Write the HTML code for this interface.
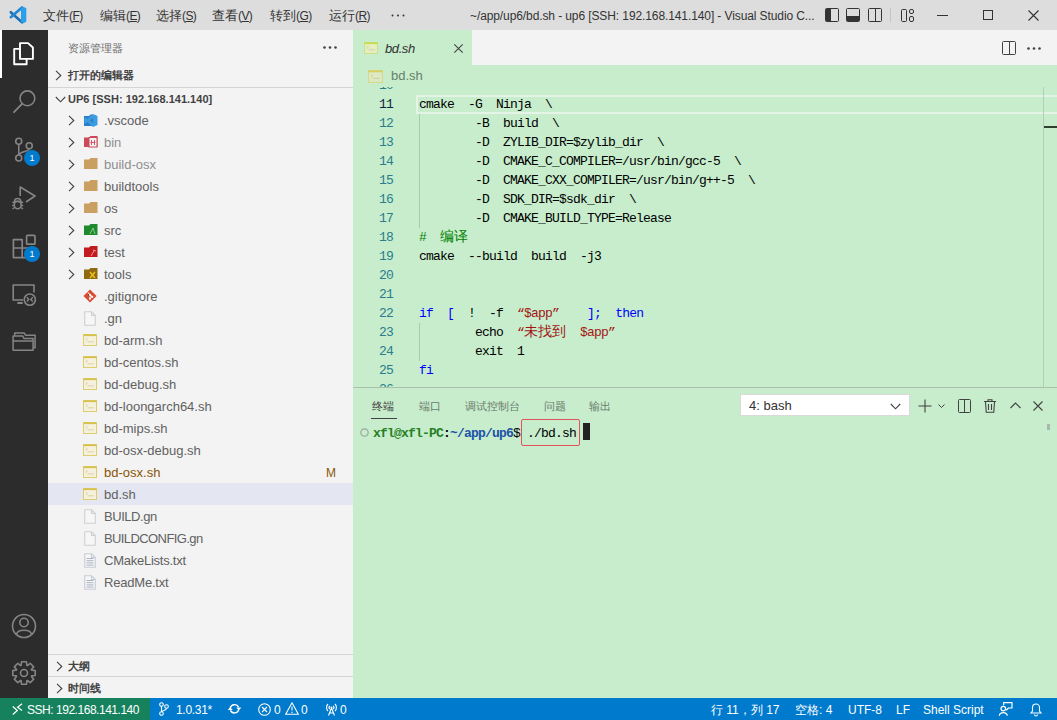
<!DOCTYPE html><html><head><meta charset="utf-8"><style>
*{margin:0;padding:0;box-sizing:border-box}
html,body{width:1057px;height:720px;overflow:hidden;font-family:"Liberation Sans",sans-serif;font-size:13px;color:#333;background:#C7EDCC;position:relative}
div,span,svg{position:absolute}
.t{white-space:pre}
svg{overflow:visible}
</style></head><body>
<div style="left:0;top:0;width:1057px;height:30px;background:#dddddd"></div>
<svg style="left:0;top:0" width="36" height="30"><path d="M10.8 12.2 L22 22.3" stroke="#1c6fb3" stroke-width="2.6" stroke-linecap="round"/><path d="M10.8 17.2 L22 7.5" stroke="#2385cf" stroke-width="2.6" stroke-linecap="round"/><path d="M21 8 L23.5 6.8 L26.3 8.2 V21.8 L23.5 23.2 L21 22 Z" fill="#2aa0ea"/></svg>
<div class="t" style="left:43px;top:1px;height:30px;line-height:30px;font-size:13px;color:#333">文件<span style="position:static;font-size:12px;letter-spacing:-0.6px">(<u>F</u>)</span></div>
<div class="t" style="left:100px;top:1px;height:30px;line-height:30px;font-size:13px;color:#333">编辑<span style="position:static;font-size:12px;letter-spacing:-0.6px">(<u>E</u>)</span></div>
<div class="t" style="left:156px;top:1px;height:30px;line-height:30px;font-size:13px;color:#333">选择<span style="position:static;font-size:12px;letter-spacing:-0.6px">(<u>S</u>)</span></div>
<div class="t" style="left:212px;top:1px;height:30px;line-height:30px;font-size:13px;color:#333">查看<span style="position:static;font-size:12px;letter-spacing:-0.6px">(<u>V</u>)</span></div>
<div class="t" style="left:270px;top:1px;height:30px;line-height:30px;font-size:13px;color:#333">转到<span style="position:static;font-size:12px;letter-spacing:-0.6px">(<u>G</u>)</span></div>
<div class="t" style="left:329px;top:1px;height:30px;line-height:30px;font-size:13px;color:#333">运行<span style="position:static;font-size:12px;letter-spacing:-0.6px">(<u>R</u>)</span></div>
<svg style="left:391px;top:14px" width="14" height="3"><circle cx="1.5" cy="1.5" r="1" fill="#333"/><circle cx="7" cy="1.5" r="1" fill="#333"/><circle cx="12.5" cy="1.5" r="1" fill="#333"/></svg>
<div class="t" style="left:470px;top:1px;height:30px;line-height:30px;font-size:12px;color:#333;letter-spacing:-0.1px">~/app/up6/bd.sh - up6 [SSH: 192.168.141.140] - Visual Studio C...</div>
<svg style="left:825px;top:8px" width="14" height="14"><rect x="0.5" y="0.5" width="13" height="13" rx="1" fill="none" stroke="#333"/><rect x="1" y="1" width="5" height="12" fill="#333"/></svg>
<svg style="left:846px;top:8px" width="14" height="14"><rect x="0.5" y="0.5" width="13" height="13" rx="1" fill="none" stroke="#333"/><rect x="1" y="8" width="12" height="5" fill="#333"/></svg>
<svg style="left:868px;top:8px" width="14" height="14"><rect x="0.5" y="0.5" width="13" height="13" rx="1" fill="none" stroke="#333"/><line x1="7.5" y1="1" x2="7.5" y2="13" stroke="#333"/></svg>
<div style="left:890px;top:8px;width:1px;height:14px;background:#c4c4c4"></div>
<svg style="left:901px;top:9px" width="13" height="13"><rect x="0.5" y="0.5" width="5" height="12" rx="1" fill="none" stroke="#333"/><rect x="8.5" y="0.5" width="4" height="4" rx="1.5" fill="none" stroke="#333"/><rect x="8.5" y="7.5" width="4" height="5" rx="1.5" fill="none" stroke="#333"/></svg>
<div style="left:937px;top:15px;width:11px;height:1px;background:#333"></div>
<div style="left:983px;top:10px;width:10px;height:10px;border:1px solid #333"></div>
<svg style="left:1028px;top:10px" width="11" height="11"><path d="M0.5 0.5 L10.5 10.5 M10.5 0.5 L0.5 10.5" stroke="#333" stroke-width="1.1"/></svg>
<div style="left:0;top:30px;width:48px;height:668px;background:#2c2c2c"></div>
<div style="left:0;top:30px;width:2px;height:48px;background:#fff"></div>
<svg style="left:8px;top:38px" width="32" height="32"><path d="M12 5.1 H20 L24.9 9.5 V20.9 H12 Z" fill="none" stroke="#fff" stroke-width="1.9" stroke-linejoin="round"/><path d="M12 10.9 H6.2 V26.2 H18.6 V20.9" fill="none" stroke="#fff" stroke-width="1.9" stroke-linejoin="round"/></svg>
<svg style="left:0;top:80px" width="48" height="40"><circle cx="27.4" cy="18.3" r="7.4" fill="none" stroke="#858585" stroke-width="1.6"/><path d="M22 23.8 L14 32.2" stroke="#858585" stroke-width="1.8" stroke-linecap="round"/></svg>
<svg style="left:12px;top:137px" width="24" height="24" viewBox="0 0 24 24"><circle cx="6.75" cy="4.25" r="3" fill="none" stroke="#858585" stroke-width="1.6"/><circle cx="6.75" cy="21" r="3" fill="none" stroke="#858585" stroke-width="1.6"/><circle cx="17.25" cy="8.75" r="3" fill="none" stroke="#858585" stroke-width="1.6"/><path d="M6.75 7.25 V18 M17.25 11.75 C17 15 8 14 7 18" fill="none" stroke="#858585" stroke-width="1.5"/></svg>
<div style="left:24px;top:150px;width:16px;height:16px;border-radius:8px;background:#007acc;color:#fff;font-size:9px;line-height:16px;text-align:center">1</div>
<svg style="left:8px;top:180px" width="40" height="35"><path d="M12.2 16 V7 L27 16 L18 22" fill="none" stroke="#858585" stroke-width="1.6" stroke-linejoin="round"/><path d="M6.5 21.5 A3.2 3 0 0 1 12.9 21.5 Z" fill="none" stroke="#858585" stroke-width="1.5"/><ellipse cx="9.7" cy="25" rx="3.4" ry="3.8" fill="none" stroke="#858585" stroke-width="1.5"/><path d="M4.5 22 L6.5 23 M15 22 L13 23 M4.2 25.5 H6.3 M15.2 25.5 H13.1 M4.5 29 L6.5 27.5 M15 29 L13 27.5" stroke="#858585" stroke-width="1.4"/></svg>
<svg style="left:12px;top:233px" width="26" height="26" viewBox="0 0 26 26"><path d="M1.4 6.6 H10.2 V24.6 H1.4 Z M1.4 15 H19.6 V24.6 H10.2" fill="none" stroke="#858585" stroke-width="1.7" stroke-linejoin="round"/><rect x="14.6" y="2.4" width="8.4" height="8.8" rx="0.8" fill="none" stroke="#858585" stroke-width="1.7"/></svg>
<div style="left:24px;top:246px;width:16px;height:16px;border-radius:8px;background:#007acc;color:#fff;font-size:9px;line-height:16px;text-align:center">1</div>
<svg style="left:8px;top:278px" width="32" height="32"><path d="M15 22 H5.2 V7 H26 V14.5" fill="none" stroke="#858585" stroke-width="1.6" stroke-linejoin="round"/><path d="M9.3 25 H14.7" stroke="#858585" stroke-width="2"/><circle cx="21.8" cy="21.6" r="5.6" fill="none" stroke="#858585" stroke-width="1.6"/><path d="M18.8 19.3 L20.8 21.4 L18.8 23.5 M24.8 19.3 L22.8 21.4 L24.8 23.5" fill="none" stroke="#858585" stroke-width="1.4"/></svg>
<svg style="left:8px;top:326px" width="32" height="30"><path d="M6.7 9.5 V6.9 H16.2 L17.6 9.3 H27.1 V21.7 H25.2" fill="none" stroke="#858585" stroke-width="1.5" stroke-linejoin="round"/><path d="M5.1 9.9 H14.6 L15.9 12.4 H25.1 V24.2 H5.1 Z M5.1 14.9 H25.1" fill="none" stroke="#858585" stroke-width="1.5" stroke-linejoin="round"/></svg>
<svg style="left:11px;top:613px" width="26" height="26" viewBox="0 0 26 26"><circle cx="13" cy="13" r="11.5" fill="none" stroke="#858585" stroke-width="1.6"/><circle cx="13" cy="9.5" r="4.2" fill="none" stroke="#858585" stroke-width="1.6"/><path d="M5.5 21 C7 16 19 16 20.5 21" fill="none" stroke="#858585" stroke-width="1.6"/></svg>
<svg style="left:11px;top:660px" width="26" height="26" viewBox="0 0 26 26"><path d="M24.22 10.49 L24.22 15.51 L20.67 15.89 L20.47 16.38 L22.71 19.16 L19.16 22.71 L16.38 20.47 L15.89 20.67 L15.51 24.22 L10.49 24.22 L10.11 20.67 L9.62 20.47 L6.84 22.71 L3.29 19.16 L5.53 16.38 L5.33 15.89 L1.78 15.51 L1.78 10.49 L5.33 10.11 L5.53 9.62 L3.29 6.84 L6.84 3.29 L9.62 5.53 L10.11 5.33 L10.49 1.78 L15.51 1.78 L15.89 5.33 L16.38 5.53 L19.16 3.29 L22.71 6.84 L20.47 9.62 L20.67 10.11 Z" fill="none" stroke="#858585" stroke-width="1.6" stroke-linejoin="round"/><circle cx="13" cy="13" r="3.5" fill="none" stroke="#858585" stroke-width="1.6"/></svg>
<div style="left:48px;top:30px;width:305px;height:668px;background:#f3f3f3"></div>
<div class="t" style="left:68px;top:39px;height:18px;line-height:18px;font-size:11px;color:#6f6f6f">资源管理器</div>
<svg style="left:323px;top:46px" width="14" height="3"><circle cx="1.5" cy="1.5" r="1.3" fill="#424242"/><circle cx="7" cy="1.5" r="1.3" fill="#424242"/><circle cx="12.5" cy="1.5" r="1.3" fill="#424242"/></svg>
<svg style="left:55px;top:70px" width="7" height="11"><path d="M1 0.8 L5.8 5.5 L1 10.2" fill="none" stroke="#424242" stroke-width="1.1"/></svg>
<div class="t" style="left:68px;top:66px;height:18px;line-height:18px;font-size:11px;font-weight:bold;color:#424242">打开的编辑器</div>
<div style="left:48px;top:87px;width:305px;height:1px;background:#d4d4d4"></div>
<svg style="left:55px;top:96px" width="11" height="7"><path d="M0.8 1 L5.5 5.8 L10.2 1" fill="none" stroke="#424242" stroke-width="1.1"/></svg>
<div class="t" style="left:68px;top:90px;height:18px;line-height:18px;font-size:11px;font-weight:bold;color:#424242;letter-spacing:0.02px">UP6 [SSH: 192.168.141.140]</div>
<svg style="left:68px;top:115px" width="7" height="11"><path d="M1 0.8 L5.8 5.5 L1 10.2" fill="none" stroke="#424242" stroke-width="1.1"/></svg>
<svg style="left:84px;top:114px" width="14" height="13" viewBox="0 0 14 13"><path d="M0 2 H5 L6.5 0.5 H9 V12 H0 Z" fill="#2b7fc6"/><path d="M9 0 L13.5 2 V11 L9 13 L3.5 8 L1.5 9.5 L0.5 9 V4 L1.5 3.5 L3.5 5 Z M9 4 L6 6.5 L9 9 Z" fill="#3d9be0" fill-rule="evenodd"/></svg>
<div class="t" style="left:104px;top:110px;height:22px;line-height:22px;font-size:13px;color:#616161;letter-spacing:0px">.vscode</div>
<svg style="left:68px;top:137px" width="7" height="11"><path d="M1 0.8 L5.8 5.5 L1 10.2" fill="none" stroke="#424242" stroke-width="1.1"/></svg>
<svg style="left:84px;top:136px" width="14" height="12" viewBox="0 0 14 12"><path d="M0 1.5 H5 L6.5 0 H13.5 V11 H0 Z" fill="#d0495b"/><rect x="5" y="1.5" width="8" height="9.5" fill="#f3f3f3" stroke="#c8475a" stroke-width="1"/><path d="M7.5 4 V9 M10.5 4 V9 M6.5 6.5 H11.5" stroke="#c8475a" stroke-width="0.9"/></svg>
<div class="t" style="left:104px;top:132px;height:22px;line-height:22px;font-size:13px;color:#8e8e90;letter-spacing:0px">bin</div>
<svg style="left:68px;top:159px" width="7" height="11"><path d="M1 0.8 L5.8 5.5 L1 10.2" fill="none" stroke="#424242" stroke-width="1.1"/></svg>
<svg style="left:84px;top:158px" width="14" height="12" viewBox="0 0 14 12"><path d="M0 1.5 H5 L6.5 0 H13.5 V11 H0 Z" fill="#c9a062"/></svg>
<div class="t" style="left:104px;top:154px;height:22px;line-height:22px;font-size:13px;color:#8e8e90;letter-spacing:0px">build-osx</div>
<svg style="left:68px;top:181px" width="7" height="11"><path d="M1 0.8 L5.8 5.5 L1 10.2" fill="none" stroke="#424242" stroke-width="1.1"/></svg>
<svg style="left:84px;top:180px" width="14" height="12" viewBox="0 0 14 12"><path d="M0 1.5 H5 L6.5 0 H13.5 V11 H0 Z" fill="#c9a062"/></svg>
<div class="t" style="left:104px;top:176px;height:22px;line-height:22px;font-size:13px;color:#616161;letter-spacing:0px">buildtools</div>
<svg style="left:68px;top:203px" width="7" height="11"><path d="M1 0.8 L5.8 5.5 L1 10.2" fill="none" stroke="#424242" stroke-width="1.1"/></svg>
<svg style="left:84px;top:202px" width="14" height="12" viewBox="0 0 14 12"><path d="M0 1.5 H5 L6.5 0 H13.5 V11 H0 Z" fill="#c9a062"/></svg>
<div class="t" style="left:104px;top:198px;height:22px;line-height:22px;font-size:13px;color:#616161;letter-spacing:0px">os</div>
<svg style="left:68px;top:225px" width="7" height="11"><path d="M1 0.8 L5.8 5.5 L1 10.2" fill="none" stroke="#424242" stroke-width="1.1"/></svg>
<svg style="left:84px;top:224px" width="14" height="12" viewBox="0 0 14 12"><path d="M0 1.5 H5 L6.5 0 H13.5 V11 H0 Z" fill="#1e8a2e"/><path d="M6 10 L9 4 L11 10" fill="none" stroke="#8fd18f" stroke-width="0.9"/></svg>
<div class="t" style="left:104px;top:220px;height:22px;line-height:22px;font-size:13px;color:#616161;letter-spacing:0px">src</div>
<svg style="left:68px;top:247px" width="7" height="11"><path d="M1 0.8 L5.8 5.5 L1 10.2" fill="none" stroke="#424242" stroke-width="1.1"/></svg>
<svg style="left:84px;top:246px" width="14" height="12" viewBox="0 0 14 12"><path d="M0 1.5 H5 L6.5 0 H13.5 V11 H0 Z" fill="#c21a1f"/><path d="M7 10 L10.5 4 M9 4 L12 5" fill="none" stroke="#f2a0a0" stroke-width="0.9"/></svg>
<div class="t" style="left:104px;top:242px;height:22px;line-height:22px;font-size:13px;color:#616161;letter-spacing:0px">test</div>
<svg style="left:68px;top:269px" width="7" height="11"><path d="M1 0.8 L5.8 5.5 L1 10.2" fill="none" stroke="#424242" stroke-width="1.1"/></svg>
<svg style="left:84px;top:268px" width="14" height="12" viewBox="0 0 14 12"><path d="M0 1.5 H5 L6.5 0 H13.5 V11 H0 Z" fill="#8f6b10"/><path d="M6 10 L11 4 M6 4 L11 10" fill="none" stroke="#f0c419" stroke-width="1.4"/></svg>
<div class="t" style="left:104px;top:264px;height:22px;line-height:22px;font-size:13px;color:#616161;letter-spacing:0px">tools</div>
<svg style="left:83px;top:289px" width="14" height="14" viewBox="0 0 16 16"><path d="M8 0.5 L15.5 8 L8 15.5 L0.5 8 Z" fill="#dd4b2f"/><path d="M5.5 4 L8 6.5 V11 M8 6.5 L10.5 9" stroke="#fff" stroke-width="1.2"/><circle cx="8" cy="11" r="1.2" fill="#fff"/><circle cx="10.5" cy="9" r="1.2" fill="#fff"/><circle cx="8" cy="6.5" r="1.1" fill="#fff"/></svg>
<div class="t" style="left:104px;top:286px;height:22px;line-height:22px;font-size:13px;color:#616161;letter-spacing:0px">.gitignore</div>
<svg style="left:84px;top:311px" width="12" height="15" viewBox="0 0 12 15"><path d="M0.7 0.7 H7.5 L11.3 4.5 V14.3 H0.7 Z M7.5 0.7 V4.5 H11.3" fill="#f6f6f6" stroke="#cfcfcf" stroke-width="1.1" stroke-linejoin="round"/></svg>
<div class="t" style="left:104px;top:308px;height:22px;line-height:22px;font-size:13px;color:#616161;letter-spacing:0px">.gn</div>
<svg style="left:83px;top:334px" width="14" height="12" viewBox="0 0 14 12"><rect x="0.5" y="0.5" width="13" height="11" fill="#f5f1dc" stroke="#dccd6e" stroke-width="1"/><rect x="0.5" y="0.5" width="13" height="1.6" fill="#d6c24a"/><path d="M2.8 4.2 L4.4 5.4 L2.8 6.6 M4.5 7.8 H11" fill="none" stroke="#d2cc9c" stroke-width="0.8"/></svg>
<div class="t" style="left:104px;top:330px;height:22px;line-height:22px;font-size:13px;color:#616161;letter-spacing:0px">bd-arm.sh</div>
<svg style="left:83px;top:356px" width="14" height="12" viewBox="0 0 14 12"><rect x="0.5" y="0.5" width="13" height="11" fill="#f5f1dc" stroke="#dccd6e" stroke-width="1"/><rect x="0.5" y="0.5" width="13" height="1.6" fill="#d6c24a"/><path d="M2.8 4.2 L4.4 5.4 L2.8 6.6 M4.5 7.8 H11" fill="none" stroke="#d2cc9c" stroke-width="0.8"/></svg>
<div class="t" style="left:104px;top:352px;height:22px;line-height:22px;font-size:13px;color:#616161;letter-spacing:0px">bd-centos.sh</div>
<svg style="left:83px;top:378px" width="14" height="12" viewBox="0 0 14 12"><rect x="0.5" y="0.5" width="13" height="11" fill="#f5f1dc" stroke="#dccd6e" stroke-width="1"/><rect x="0.5" y="0.5" width="13" height="1.6" fill="#d6c24a"/><path d="M2.8 4.2 L4.4 5.4 L2.8 6.6 M4.5 7.8 H11" fill="none" stroke="#d2cc9c" stroke-width="0.8"/></svg>
<div class="t" style="left:104px;top:374px;height:22px;line-height:22px;font-size:13px;color:#616161;letter-spacing:0px">bd-debug.sh</div>
<svg style="left:83px;top:400px" width="14" height="12" viewBox="0 0 14 12"><rect x="0.5" y="0.5" width="13" height="11" fill="#f5f1dc" stroke="#dccd6e" stroke-width="1"/><rect x="0.5" y="0.5" width="13" height="1.6" fill="#d6c24a"/><path d="M2.8 4.2 L4.4 5.4 L2.8 6.6 M4.5 7.8 H11" fill="none" stroke="#d2cc9c" stroke-width="0.8"/></svg>
<div class="t" style="left:104px;top:396px;height:22px;line-height:22px;font-size:13px;color:#616161;letter-spacing:0px">bd-loongarch64.sh</div>
<svg style="left:83px;top:422px" width="14" height="12" viewBox="0 0 14 12"><rect x="0.5" y="0.5" width="13" height="11" fill="#f5f1dc" stroke="#dccd6e" stroke-width="1"/><rect x="0.5" y="0.5" width="13" height="1.6" fill="#d6c24a"/><path d="M2.8 4.2 L4.4 5.4 L2.8 6.6 M4.5 7.8 H11" fill="none" stroke="#d2cc9c" stroke-width="0.8"/></svg>
<div class="t" style="left:104px;top:418px;height:22px;line-height:22px;font-size:13px;color:#616161;letter-spacing:0px">bd-mips.sh</div>
<svg style="left:83px;top:444px" width="14" height="12" viewBox="0 0 14 12"><rect x="0.5" y="0.5" width="13" height="11" fill="#f5f1dc" stroke="#dccd6e" stroke-width="1"/><rect x="0.5" y="0.5" width="13" height="1.6" fill="#d6c24a"/><path d="M2.8 4.2 L4.4 5.4 L2.8 6.6 M4.5 7.8 H11" fill="none" stroke="#d2cc9c" stroke-width="0.8"/></svg>
<div class="t" style="left:104px;top:440px;height:22px;line-height:22px;font-size:13px;color:#616161;letter-spacing:0px">bd-osx-debug.sh</div>
<svg style="left:83px;top:466px" width="14" height="12" viewBox="0 0 14 12"><rect x="0.5" y="0.5" width="13" height="11" fill="#f5f1dc" stroke="#dccd6e" stroke-width="1"/><rect x="0.5" y="0.5" width="13" height="1.6" fill="#d6c24a"/><path d="M2.8 4.2 L4.4 5.4 L2.8 6.6 M4.5 7.8 H11" fill="none" stroke="#d2cc9c" stroke-width="0.8"/></svg>
<div class="t" style="left:104px;top:462px;height:22px;line-height:22px;font-size:13px;color:#895503;letter-spacing:0px">bd-osx.sh</div>
<div class="t" style="left:326px;top:462px;height:22px;line-height:22px;font-size:12px;color:#895503">M</div>
<div style="left:48px;top:483px;width:305px;height:22px;background:#e4e6f1"></div>
<svg style="left:83px;top:488px" width="14" height="12" viewBox="0 0 14 12"><rect x="0.5" y="0.5" width="13" height="11" fill="#f5f1dc" stroke="#dccd6e" stroke-width="1"/><rect x="0.5" y="0.5" width="13" height="1.6" fill="#d6c24a"/><path d="M2.8 4.2 L4.4 5.4 L2.8 6.6 M4.5 7.8 H11" fill="none" stroke="#d2cc9c" stroke-width="0.8"/></svg>
<div class="t" style="left:104px;top:484px;height:22px;line-height:22px;font-size:13px;color:#616161;letter-spacing:0px">bd.sh</div>
<svg style="left:84px;top:509px" width="12" height="15" viewBox="0 0 12 15"><path d="M0.7 0.7 H7.5 L11.3 4.5 V14.3 H0.7 Z M7.5 0.7 V4.5 H11.3" fill="#f6f6f6" stroke="#cfcfcf" stroke-width="1.1" stroke-linejoin="round"/></svg>
<div class="t" style="left:104px;top:506px;height:22px;line-height:22px;font-size:13px;color:#616161;letter-spacing:-0.45px">BUILD.gn</div>
<svg style="left:84px;top:531px" width="12" height="15" viewBox="0 0 12 15"><path d="M0.7 0.7 H7.5 L11.3 4.5 V14.3 H0.7 Z M7.5 0.7 V4.5 H11.3" fill="#f6f6f6" stroke="#cfcfcf" stroke-width="1.1" stroke-linejoin="round"/></svg>
<div class="t" style="left:104px;top:528px;height:22px;line-height:22px;font-size:13px;color:#616161;letter-spacing:-0.6px">BUILDCONFIG.gn</div>
<svg style="left:84px;top:553px" width="12" height="15" viewBox="0 0 12 15"><path d="M0.7 0.7 H7.5 L11.3 4.5 V14.3 H0.7 Z M7.5 0.7 V4.5 H11.3" fill="#f6f6f6" stroke="#c6ccd6" stroke-width="1.1" stroke-linejoin="round"/><path d="M2.5 5.5 H9.5 M2.5 7.7 H9.5 M2.5 9.9 H9.5 M2.5 12.1 H9.5" stroke="#a9b3c2" stroke-width="1"/></svg>
<div class="t" style="left:104px;top:550px;height:22px;line-height:22px;font-size:13px;color:#616161;letter-spacing:-0.25px">CMakeLists.txt</div>
<svg style="left:84px;top:575px" width="12" height="15" viewBox="0 0 12 15"><path d="M0.7 0.7 H7.5 L11.3 4.5 V14.3 H0.7 Z M7.5 0.7 V4.5 H11.3" fill="#f6f6f6" stroke="#c6ccd6" stroke-width="1.1" stroke-linejoin="round"/><path d="M2.5 5.5 H9.5 M2.5 7.7 H9.5 M2.5 9.9 H9.5 M2.5 12.1 H9.5" stroke="#a9b3c2" stroke-width="1"/></svg>
<div class="t" style="left:104px;top:572px;height:22px;line-height:22px;font-size:13px;color:#616161;letter-spacing:-0.2px">ReadMe.txt</div>
<div style="left:48px;top:654px;width:305px;height:1px;background:#d4d4d4"></div>
<svg style="left:56px;top:661px" width="7" height="11"><path d="M1 0.8 L5.8 5.5 L1 10.2" fill="none" stroke="#424242" stroke-width="1.1"/></svg>
<div class="t" style="left:68px;top:657px;height:18px;line-height:18px;font-size:11px;font-weight:bold;color:#424242">大纲</div>
<div style="left:48px;top:676px;width:305px;height:1px;background:#d4d4d4"></div>
<svg style="left:56px;top:683px" width="7" height="11"><path d="M1 0.8 L5.8 5.5 L1 10.2" fill="none" stroke="#424242" stroke-width="1.1"/></svg>
<div class="t" style="left:68px;top:679px;height:18px;line-height:18px;font-size:11px;font-weight:bold;color:#424242">时间线</div>
<div style="left:353px;top:30px;width:704px;height:668px;background:#C7EDCC"></div>
<div style="left:353px;top:30px;width:704px;height:35px;background:#f3f3f3"></div>
<div style="left:353px;top:30px;width:119px;height:35px;background:#C7EDCC"></div>
<svg style="left:364px;top:42px" width="14" height="12" viewBox="0 0 14 12"><rect x="0.5" y="0.5" width="13" height="11" fill="#e4eec3" stroke="#d0df86" stroke-width="1"/><rect x="0.5" y="0.5" width="13" height="1.6" fill="#c5dc48"/><path d="M2.8 4.2 L4.4 5.4 L2.8 6.6 M4.5 7.8 H11" fill="none" stroke="#d2cc9c" stroke-width="0.8"/></svg>
<div class="t" style="left:385px;top:31px;height:35px;line-height:35px;font-size:13px;font-style:italic;color:#333;letter-spacing:-0.4px">bd.sh</div>
<svg style="left:454px;top:44px" width="9" height="9"><path d="M0.3 0.3 L8.7 8.7 M8.7 0.3 L0.3 8.7" stroke="#424242" stroke-width="1.1"/></svg>
<svg style="left:1002px;top:41px" width="14" height="14"><rect x="0.5" y="0.5" width="13" height="13" rx="1" fill="none" stroke="#424242"/><line x1="7.5" y1="1" x2="7.5" y2="13" stroke="#424242"/></svg>
<svg style="left:1027px;top:47px" width="14" height="3"><circle cx="1.5" cy="1.5" r="1.3" fill="#424242"/><circle cx="7" cy="1.5" r="1.3" fill="#424242"/><circle cx="12.5" cy="1.5" r="1.3" fill="#424242"/></svg>
<div style="left:368px;top:70px;width:15px;height:13px;transform-origin:0 0"><svg style="left:0px;top:0px" width="15" height="13" preserveAspectRatio="none" viewBox="0 0 14 12"><rect x="0.5" y="0.5" width="13" height="11" fill="#dce9c2" stroke="#d6d98e" stroke-width="1"/><rect x="0.5" y="0.5" width="13" height="1.6" fill="#d8cf5c"/><path d="M2.8 4.2 L4.4 5.4 L2.8 6.6 M4.5 7.8 H11" fill="none" stroke="#d2cc9c" stroke-width="0.8"/></svg></div>
<div class="t" style="left:391px;top:65px;height:22px;line-height:22px;font-size:13px;color:#687f6b">bd.sh</div>
<div style="left:353px;top:87px;width:704px;height:300px;overflow:hidden">
<div class="t" style="left:0;top:-11px;width:40px;height:19px;line-height:19px;text-align:right;font-family:'Liberation Mono',monospace;font-size:13px;letter-spacing:-0.8px;color:#2a7d8c">10</div>
<div style="left:63px;top:8px;width:645px;height:19px;border:2px solid #e4f4e7"></div>
<div class="t" style="left:0;top:8px;width:40px;height:19px;line-height:19px;text-align:right;font-family:'Liberation Mono',monospace;font-size:13px;letter-spacing:-0.8px;color:#0f2540">11</div>
<div class="t" style="left:66px;top:8px;height:19px;line-height:19px;font-family:'Liberation Mono',monospace;font-size:13px;letter-spacing:-0.8px"><span style="position:static;color:#000">cmake  -G  Ninja  \</span></div>
<div class="t" style="left:0;top:27px;width:40px;height:19px;line-height:19px;text-align:right;font-family:'Liberation Mono',monospace;font-size:13px;letter-spacing:-0.8px;color:#2a7d8c">12</div>
<div class="t" style="left:66px;top:27px;height:19px;line-height:19px;font-family:'Liberation Mono',monospace;font-size:13px;letter-spacing:-0.8px"><span style="position:static;color:#000">        -B  build  \</span></div>
<div class="t" style="left:0;top:46px;width:40px;height:19px;line-height:19px;text-align:right;font-family:'Liberation Mono',monospace;font-size:13px;letter-spacing:-0.8px;color:#2a7d8c">13</div>
<div class="t" style="left:66px;top:46px;height:19px;line-height:19px;font-family:'Liberation Mono',monospace;font-size:13px;letter-spacing:-0.8px"><span style="position:static;color:#000">        -D  ZYLIB_DIR=$zylib_dir  \</span></div>
<div class="t" style="left:0;top:65px;width:40px;height:19px;line-height:19px;text-align:right;font-family:'Liberation Mono',monospace;font-size:13px;letter-spacing:-0.8px;color:#2a7d8c">14</div>
<div class="t" style="left:66px;top:65px;height:19px;line-height:19px;font-family:'Liberation Mono',monospace;font-size:13px;letter-spacing:-0.8px"><span style="position:static;color:#000">        -D  CMAKE_C_COMPILER=/usr/bin/gcc-5  \</span></div>
<div class="t" style="left:0;top:84px;width:40px;height:19px;line-height:19px;text-align:right;font-family:'Liberation Mono',monospace;font-size:13px;letter-spacing:-0.8px;color:#2a7d8c">15</div>
<div class="t" style="left:66px;top:84px;height:19px;line-height:19px;font-family:'Liberation Mono',monospace;font-size:13px;letter-spacing:-0.8px"><span style="position:static;color:#000">        -D  CMAKE_CXX_COMPILER=/usr/bin/g++-5  \</span></div>
<div class="t" style="left:0;top:103px;width:40px;height:19px;line-height:19px;text-align:right;font-family:'Liberation Mono',monospace;font-size:13px;letter-spacing:-0.8px;color:#2a7d8c">16</div>
<div class="t" style="left:66px;top:103px;height:19px;line-height:19px;font-family:'Liberation Mono',monospace;font-size:13px;letter-spacing:-0.8px"><span style="position:static;color:#000">        -D  SDK_DIR=$sdk_dir  \</span></div>
<div class="t" style="left:0;top:122px;width:40px;height:19px;line-height:19px;text-align:right;font-family:'Liberation Mono',monospace;font-size:13px;letter-spacing:-0.8px;color:#2a7d8c">17</div>
<div class="t" style="left:66px;top:122px;height:19px;line-height:19px;font-family:'Liberation Mono',monospace;font-size:13px;letter-spacing:-0.8px"><span style="position:static;color:#000">        -D  CMAKE_BUILD_TYPE=Release</span></div>
<div class="t" style="left:0;top:141px;width:40px;height:19px;line-height:19px;text-align:right;font-family:'Liberation Mono',monospace;font-size:13px;letter-spacing:-0.8px;color:#2a7d8c">18</div>
<div class="t" style="left:66px;top:141px;height:19px;line-height:19px;font-family:'Liberation Mono',monospace;font-size:13px;letter-spacing:-0.8px"><span style="position:static;color:#008000">#  <span style="position:static;font-size:14px;letter-spacing:0">编译</span></span></div>
<div class="t" style="left:0;top:160px;width:40px;height:19px;line-height:19px;text-align:right;font-family:'Liberation Mono',monospace;font-size:13px;letter-spacing:-0.8px;color:#2a7d8c">19</div>
<div class="t" style="left:66px;top:160px;height:19px;line-height:19px;font-family:'Liberation Mono',monospace;font-size:13px;letter-spacing:-0.8px"><span style="position:static;color:#000">cmake  --build  build  -j3</span></div>
<div class="t" style="left:0;top:179px;width:40px;height:19px;line-height:19px;text-align:right;font-family:'Liberation Mono',monospace;font-size:13px;letter-spacing:-0.8px;color:#2a7d8c">20</div>
<div class="t" style="left:0;top:198px;width:40px;height:19px;line-height:19px;text-align:right;font-family:'Liberation Mono',monospace;font-size:13px;letter-spacing:-0.8px;color:#2a7d8c">21</div>
<div class="t" style="left:0;top:217px;width:40px;height:19px;line-height:19px;text-align:right;font-family:'Liberation Mono',monospace;font-size:13px;letter-spacing:-0.8px;color:#2a7d8c">22</div>
<div class="t" style="left:66px;top:217px;height:19px;line-height:19px;font-family:'Liberation Mono',monospace;font-size:13px;letter-spacing:-0.8px"><span style="position:static;color:#0000ff">if</span><span style="position:static;color:#000">  </span><span style="position:static;color:#0000ff">[</span><span style="position:static;color:#000">  !  -f  </span><span style="position:static;color:#a31515">“$app”</span><span style="position:static;color:#000">    </span><span style="position:static;color:#0000ff">];</span><span style="position:static;color:#000">  </span><span style="position:static;color:#0000ff">then</span></div>
<div class="t" style="left:0;top:236px;width:40px;height:19px;line-height:19px;text-align:right;font-family:'Liberation Mono',monospace;font-size:13px;letter-spacing:-0.8px;color:#2a7d8c">23</div>
<div class="t" style="left:66px;top:236px;height:19px;line-height:19px;font-family:'Liberation Mono',monospace;font-size:13px;letter-spacing:-0.8px"><span style="position:static;color:#000">        echo  </span><span style="position:static;color:#a31515">“<span style="position:static;font-size:14px;letter-spacing:0">未找到</span>  $app”</span></div>
<div class="t" style="left:0;top:255px;width:40px;height:19px;line-height:19px;text-align:right;font-family:'Liberation Mono',monospace;font-size:13px;letter-spacing:-0.8px;color:#2a7d8c">24</div>
<div class="t" style="left:66px;top:255px;height:19px;line-height:19px;font-family:'Liberation Mono',monospace;font-size:13px;letter-spacing:-0.8px"><span style="position:static;color:#000">        exit  1</span></div>
<div class="t" style="left:0;top:274px;width:40px;height:19px;line-height:19px;text-align:right;font-family:'Liberation Mono',monospace;font-size:13px;letter-spacing:-0.8px;color:#2a7d8c">25</div>
<div class="t" style="left:66px;top:274px;height:19px;line-height:19px;font-family:'Liberation Mono',monospace;font-size:13px;letter-spacing:-0.8px"><span style="position:static;color:#0000ff">fi</span></div>
<div class="t" style="left:0;top:293px;width:40px;height:19px;line-height:19px;text-align:right;font-family:'Liberation Mono',monospace;font-size:13px;letter-spacing:-0.8px;color:#2a7d8c">26</div>
<div style="left:66px;top:27px;width:1px;height:114px;background:#a9c9ae"></div>
<div style="left:66px;top:236px;width:1px;height:38px;background:#a9c9ae"></div>
</div>
<div style="left:1043px;top:87px;width:1px;height:300px;background:#b6cdb9"></div>
<div style="left:1044px;top:126px;width:13px;height:2px;background:#2f3f30"></div>
<div style="left:353px;top:387px;width:704px;height:1px;background:#a9c0ac"></div>
<div class="t" style="left:372px;top:397px;height:18px;line-height:18px;font-size:11px;color:#424242">终端</div>
<div class="t" style="left:419px;top:397px;height:18px;line-height:18px;font-size:11px;color:#6b7a6d">端口</div>
<div class="t" style="left:465px;top:397px;height:18px;line-height:18px;font-size:11px;color:#6b7a6d">调试控制台</div>
<div class="t" style="left:544px;top:397px;height:18px;line-height:18px;font-size:11px;color:#6b7a6d">问题</div>
<div class="t" style="left:589px;top:397px;height:18px;line-height:18px;font-size:11px;color:#6b7a6d">输出</div>
<div style="left:371px;top:418px;width:26px;height:1px;background:#424242"></div>
<div style="left:740px;top:394px;width:170px;height:22px;background:#fff;border:1px solid #dadada"></div>
<div class="t" style="left:749px;top:395px;height:22px;line-height:22px;font-size:13px;color:#333">4: bash</div>
<svg style="left:890px;top:403px" width="11" height="7"><path d="M0.8 1 L5.5 5.8 L10.2 1" fill="none" stroke="#424242" stroke-width="1.1"/></svg>
<svg style="left:918px;top:399px" width="14" height="14"><path d="M7 0.5 V13.5 M0.5 7 H13.5" stroke="#424242" stroke-width="1.1"/></svg>
<svg style="left:938px;top:404px" width="7" height="5"><path d="M0.5 0.5 L3.5 3.5 L6.5 0.5" fill="none" stroke="#424242" stroke-width="1"/></svg>
<svg style="left:958px;top:399px" width="13" height="14"><rect x="0.5" y="0.5" width="12" height="13" rx="1" fill="none" stroke="#424242"/><line x1="6.5" y1="1" x2="6.5" y2="13" stroke="#424242"/></svg>
<svg style="left:984px;top:399px" width="12" height="14"><path d="M0 2.5 H12 M4 2.5 V0.8 H8 V2.5 M1.5 2.5 L2.2 13.3 H9.8 L10.5 2.5 M4.5 5 V11 M7.5 5 V11" fill="none" stroke="#424242" stroke-width="1.1"/></svg>
<svg style="left:1010px;top:402px" width="11" height="7"><path d="M0.5 6 L5.5 1 L10.5 6" fill="none" stroke="#424242" stroke-width="1.1"/></svg>
<svg style="left:1033px;top:401px" width="10" height="10"><path d="M0.5 0.5 L9.5 9.5 M9.5 0.5 L0.5 9.5" stroke="#424242" stroke-width="1.1"/></svg>
<div style="left:1047px;top:424px;width:3px;height:6px;background:#a8b8aa"></div>
<svg style="left:360px;top:428px" width="9" height="9"><circle cx="4.5" cy="4.5" r="3.7" fill="none" stroke="#9aa89c" stroke-width="1.2"/></svg>
<div class="t" style="left:373px;top:424px;height:19px;line-height:19px;font-family:'Liberation Mono',monospace;font-size:13px;letter-spacing:-0.8px"><span style="position:static;color:#267f26;font-weight:bold">xfl@xfl-PC</span><span style="position:static;color:#000;font-weight:bold">:</span><span style="position:static;color:#1d52a8;font-weight:bold">~/app/up6</span><span style="position:static;color:#000">$ ./bd.sh</span></div>
<div style="left:521px;top:419px;width:59px;height:27px;border:1.5px solid #e2525a;border-radius:2px"></div>
<div style="left:583px;top:423px;width:7px;height:17px;background:#222"></div>
<div style="left:0;top:698px;width:1057px;height:22px;background:#007acc"></div>
<div style="left:0;top:698px;width:150px;height:22px;background:#16825d"></div>
<svg style="left:10px;top:700px" width="14" height="18"><path d="M2.8 6.5 L7.3 10.5 L2.8 14.5 M12 3.8 L7.6 7.2 L12 10.5" fill="none" stroke="#fff" stroke-width="1.2"/></svg>
<div class="t" style="left:27px;top:698px;height:22px;line-height:24px;font-size:12px;color:#fff;letter-spacing:-0.47px">SSH: 192.168.141.140</div>
<svg style="left:159px;top:702px" width="10" height="14"><circle cx="2.5" cy="2.5" r="1.8" fill="none" stroke="#fff" stroke-width="1.1"/><circle cx="2.5" cy="11.5" r="1.8" fill="none" stroke="#fff" stroke-width="1.1"/><circle cx="7.5" cy="4.5" r="1.8" fill="none" stroke="#fff" stroke-width="1.1"/><path d="M2.5 4.3 V9.7 M7.5 6.3 C7.5 9 3 8 2.7 9.8" fill="none" stroke="#fff" stroke-width="1.1"/></svg>
<div class="t" style="left:176px;top:698px;height:22px;line-height:24px;font-size:12px;color:#fff;letter-spacing:-0.3px">1.0.31*</div>
<svg style="left:226px;top:702px" width="17" height="14"><path d="M4.2 6 A4.5 4.5 0 0 1 12.6 5.2 M12.8 7.6 A4.5 4.5 0 0 1 4.4 8.4" fill="none" stroke="#fff" stroke-width="1.4"/><path d="M10.3 5.6 L15.3 5.6 L12.8 8.4 Z M1.7 8 L6.7 8 L4.2 5.2 Z" fill="#fff"/></svg>
<svg style="left:258px;top:703px" width="13" height="13"><circle cx="6.5" cy="6.5" r="5.8" fill="none" stroke="#fff" stroke-width="1.1"/><path d="M4 4 L9 9 M9 4 L4 9" stroke="#fff" stroke-width="1.1"/></svg>
<div class="t" style="left:274px;top:698px;height:22px;line-height:24px;font-size:12px;color:#fff">0</div>
<svg style="left:285px;top:702px" width="14" height="13"><path d="M7 0.8 L13.3 12.3 H0.7 Z M7 4.5 V8.5 M7 9.8 V11" fill="none" stroke="#fff" stroke-width="1.1"/></svg>
<div class="t" style="left:301px;top:698px;height:22px;line-height:24px;font-size:12px;color:#fff">0</div>
<svg style="left:325px;top:702px" width="13" height="14"><path d="M6.5 6 L3.5 13.5 M6.5 6 L9.5 13.5 M4.5 11 H8.5 M3 2 A5 5 0 0 0 3 9 M10 2 A5 5 0 0 1 10 9 M4.8 3.8 A2.5 2.5 0 0 0 4.8 7.2 M8.2 3.8 A2.5 2.5 0 0 1 8.2 7.2" fill="none" stroke="#fff" stroke-width="1.1"/><circle cx="6.5" cy="5.5" r="1" fill="#fff"/></svg>
<div class="t" style="left:340px;top:698px;height:22px;line-height:24px;font-size:12px;color:#fff">0</div>
<div class="t" style="left:711px;top:698px;height:22px;line-height:24px;font-size:12px;color:#fff">行 11，列 17</div>
<div class="t" style="left:795px;top:698px;height:22px;line-height:24px;font-size:12px;color:#fff">空格: 4</div>
<div class="t" style="left:848px;top:698px;height:22px;line-height:24px;font-size:12px;color:#fff">UTF-8</div>
<div class="t" style="left:896px;top:698px;height:22px;line-height:24px;font-size:12px;color:#fff">LF</div>
<div class="t" style="left:923px;top:698px;height:22px;line-height:24px;font-size:12px;color:#fff">Shell Script</div>
<svg style="left:996px;top:700px" width="18" height="18"><circle cx="7.3" cy="8.6" r="2.3" fill="none" stroke="#fff" stroke-width="1.2"/><path d="M3.3 15.8 C3.8 11.6 10.8 11.6 11.3 15.8 M7.6 5.3 V2.6 H16 V8 H12.5 L10.2 10.2" fill="none" stroke="#fff" stroke-width="1.2" stroke-linejoin="round"/></svg>
<svg style="left:1030px;top:702px" width="12" height="14"><path d="M1 11 H11 L9.5 9 V5.5 A3.5 3.5 0 0 0 2.5 5.5 V9 Z M4.5 12.5 A1.5 1.5 0 0 0 7.5 12.5" fill="none" stroke="#fff" stroke-width="1.1"/></svg>
</body></html>
